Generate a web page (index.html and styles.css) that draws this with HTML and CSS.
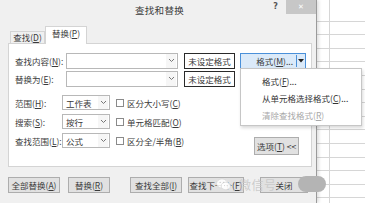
FILE: index.html
```html
<!DOCTYPE html>
<html lang="zh">
<head>
<meta charset="utf-8">
<link rel="stylesheet" href="styles.css">
</head>
<body>
<div class="screen">
  <div class="dialog">
    <div class="titlebar">
      <span class="title">查找和替换</span>
      <span class="help">?</span>
      <span class="close">✕</span>
    </div>
    <div class="tabs">
      <div class="tab">查找(<u>D</u>)</div>
      <div class="tab active">替换(<u>P</u>)</div>
    </div>
    <div class="panel">
      <div class="row find">
        <span class="lbl">查找内容(<u>N</u>):</span>
        <div class="combo wide"><span class="val"></span><span class="arr"><svg width="7" height="5" viewBox="0 0 7 5"><path d="M1 1l2.5 2.5L6 1" fill="none" stroke="#777" stroke-width="1"/></svg></span></div>
        <div class="fmtbox">未设定格式</div>
        <div class="split"><span class="st">格式(<u>M</u>)...</span><span class="sd"><svg width="6" height="4" viewBox="0 0 6 4"><path d="M0 0h6L3 3.5z" fill="#222"/></svg></span></div>
      </div>
      <div class="row repl">
        <span class="lbl">替换为(<u>E</u>):</span>
        <div class="combo wide"><span class="val"></span><span class="arr"><svg width="7" height="5" viewBox="0 0 7 5"><path d="M1 1l2.5 2.5L6 1" fill="none" stroke="#777" stroke-width="1"/></svg></span></div>
        <div class="fmtbox">未设定格式</div>
      </div>
      <div class="lower">
        <div class="optcol">
          <div class="orow">
            <span class="olbl">范围(<u>H</u>):</span>
            <div class="combo small"><span class="val">工作表</span><span class="arr"><svg width="7" height="5" viewBox="0 0 7 5"><path d="M1 1l2.5 2.5L6 1" fill="none" stroke="#777" stroke-width="1"/></svg></span></div>
            <span class="chk"></span><span class="clbl">区分大小写(<u>C</u>)</span>
          </div>
          <div class="orow">
            <span class="olbl">搜索(<u>S</u>):</span>
            <div class="combo small"><span class="val">按行</span><span class="arr"><svg width="7" height="5" viewBox="0 0 7 5"><path d="M1 1l2.5 2.5L6 1" fill="none" stroke="#777" stroke-width="1"/></svg></span></div>
            <span class="chk"></span><span class="clbl">单元格匹配(<u>O</u>)</span>
          </div>
          <div class="orow">
            <span class="olbl">查找范围(<u>L</u>):</span>
            <div class="combo small"><span class="val">公式</span><span class="arr"><svg width="7" height="5" viewBox="0 0 7 5"><path d="M1 1l2.5 2.5L6 1" fill="none" stroke="#777" stroke-width="1"/></svg></span></div>
            <span class="chk"></span><span class="clbl">区分全/半角(<u>B</u>)</span>
          </div>
        </div>
        <div class="btn optbtn">选项(<u>T</u>) &lt;&lt;</div>
      </div>
    </div>
    <div class="buttons">
      <div class="btn b1">全部替换(<u>A</u>)</div>
      <div class="btn b2">替换(<u>R</u>)</div>
      <div class="btn b3">查找全部(<u>I</u>)</div>
      <div class="btn b4">查找下一个(<u>F</u>)</div>
      <div class="btn b5">关闭</div>
    </div>
  </div>
  <div class="sheet"></div>

  <div class="menu">
    <div class="mi">格式(<u>F</u>)...</div>
    <div class="mi">从单元格选择格式(<u>C</u>)...</div>
    <div class="mi dis">清除查找格式(<u>R</u>)</div>
  </div>

  <div class="watermark">
    <svg class="wx" width="15" height="13" viewBox="0 0 15 13"><ellipse cx="6" cy="5.5" rx="5.5" ry="4.6" fill="rgba(255,255,255,0.85)" stroke="#d8d8d8" stroke-width="0.8"/><ellipse cx="9.8" cy="8" rx="4.6" ry="3.8" fill="rgba(255,255,255,0.9)" stroke="#d8d8d8" stroke-width="0.8"/><circle cx="4.2" cy="4.4" r="0.7" fill="#ccc"/><circle cx="7.6" cy="4.4" r="0.7" fill="#ccc"/><circle cx="8.6" cy="7.6" r="0.55" fill="#ccc"/><circle cx="11.2" cy="7.6" r="0.55" fill="#ccc"/></svg>
    <span class="wtext">微信号:</span>
    <span class="blob"></span>
  </div>
</div>
</body>
</html>
```

FILE: styles.css
```css
* { box-sizing: border-box; }
html, body { margin: 0; padding: 0; }
body {
  width: 365px;
  height: 203px;
  overflow: hidden;
  font-family: "Noto Sans CJK SC", "Noto Sans", sans-serif;
  font-size: 9px;
  color: #3a3a3a;
  background: #fff;
}
u { text-decoration: underline; text-underline-offset: 1px; }

.screen {
  position: relative;
  display: flex;
  width: 365px;
  height: 203px;
}

.dialog {
  width: 317px;
  height: 203px;
  background: #f0f0f0;
  border-right: 1px solid #9a9a9a;
  box-shadow: 2px 0 3px rgba(0,0,0,0.12);
  display: flex;
  flex-direction: column;
  flex: none;
  position: relative;
  z-index: 1;
}

.titlebar {
  height: 22px;
  display: flex;
  align-items: flex-start;
  position: relative;
}
.title {
  position: absolute;
  left: 135px;
  top: 3px;
  font-size: 9.5px;
  color: #3a3a3a;
  letter-spacing: 0.3px;
}
.help {
  margin-left: auto;
  margin-top: 2px;
  margin-right: 8px;
  font-family: "DejaVu Sans", sans-serif;
  font-weight: bold;
  font-size: 8px;
  color: #555;
}
.close {
  width: 30px;
  height: 14px;
  background: #c7c7c7;
  color: #fff;
  font-family: "DejaVu Sans", sans-serif;
  font-size: 7px;
  display: flex;
  align-items: center;
  justify-content: center;
}

.tabs {
  height: 21px;
  display: flex;
  align-items: flex-end;
  padding-left: 10px;
}
.tab {
  height: 12px;
  width: 35px;
  border: 1px solid #d4d4d4;
  border-bottom: none;
  background: #f0f0f0;
  font-size: 8.5px;
  line-height: 11px;
  white-space: nowrap;
  display: flex;
  justify-content: center;
}
.tab.active {
  height: 18px;
  width: 42px;
  background: #fff;
  margin-bottom: -1px;
  position: relative;
  z-index: 2;
  line-height: 13px;
}

.panel {
  margin-left: 8px;
  width: 304px;
  height: 124px;
  border: 1px solid #d4d4d4;
  background: #fff;
  padding: 8px 0 0 6px;
  position: relative;
}

.row {
  display: flex;
  align-items: center;
  height: 17px;
}
.row.repl { margin-top: 1px; }
.lbl {
  width: 51px;
  font-size: 8.5px;
  white-space: nowrap;
}
.combo {
  height: 16px;
  border: 1px solid #b8b8b8;
  background: #fff;
  display: flex;
  align-items: center;
}
.combo.wide { width: 112px; }
.combo .val { flex: 1; padding-left: 3px; font-size: 8.5px; }
.combo .arr {
  width: 10px;
  height: 100%;
  display: flex;
  align-items: center;
  justify-content: center;
  background: #f6f6f6;
  margin-right: 1px;
}
.fmtbox {
  margin-left: 6px;
  width: 51px;
  height: 16px;
  border: 1px solid #2a2a2a;
  background: #fff;
  font-size: 8.5px;
  display: flex;
  align-items: center;
  justify-content: center;
}
.split {
  margin-left: 5px;
  width: 66px;
  height: 16px;
  border: 1px solid #4a90d9;
  background: #dbeaf9;
  display: flex;
  align-items: center;
}
.split .st { flex: 1; text-align: right; padding-right: 3px; font-size: 8.5px; }
.split .sd {
  width: 9px;
  height: 12px;
  border-left: 1px solid #4a90d9;
  display: flex;
  align-items: center;
  justify-content: center;
}

.lower {
  display: flex;
  margin-top: 8px;
}
.optcol {
  display: flex;
  flex-direction: column;
  gap: 4px;
}
.orow {
  display: flex;
  align-items: center;
  height: 15px;
}
.olbl {
  width: 47px;
  font-size: 8.5px;
  white-space: nowrap;
}
.combo.small { width: 48px; height: 15px; }
.chk {
  width: 8px;
  height: 8px;
  border: 1px solid #8a8a8a;
  background: #fff;
  margin-left: 6px;
  margin-right: 3px;
}
.clbl { font-size: 8.5px; white-space: nowrap; }

.btn {
  height: 16px;
  border: 1px solid #adadad;
  background: #e1e1e1;
  font-size: 8.5px;
  display: flex;
  align-items: center;
  justify-content: center;
  white-space: nowrap;
}
.optbtn {
  width: 45px;
  height: 18px;
  margin-left: 70px;
  margin-top: 42px;
}

.buttons {
  display: flex;
  margin-top: 10px;
  padding-left: 8px;
}
.b1 { width: 52px; }
.b2 { width: 42px; margin-left: 8px; }
.b3 { width: 52px; margin-left: 20px; }
.b4 { width: 56px; margin-left: 6px; }
.b5 { width: 48px; margin-left: 16px; }

.sheet {
  flex: 1;
  background-color: #fff;
  background-image:
    linear-gradient(to right, transparent 12px, #d6d6d6 12px, #d6d6d6 13px, transparent 13px),
    repeating-linear-gradient(to bottom, transparent 0, transparent 12.6px, #d6d6d6 12.6px, #d6d6d6 13.6px);
  background-position: 0 0, 0 8px;
}

.menu {
  position: absolute;
  left: 240px;
  top: 68px;
  width: 122px;
  height: 58px;
  background: #fff;
  border: 1px solid #c6c6c6;
  box-shadow: 1px 2px 3px rgba(0,0,0,0.15);
  z-index: 5;
  padding-top: 5px;
}
.mi {
  height: 17px;
  padding-left: 21px;
  font-size: 8.5px;
  line-height: 15px;
  color: #333;
}
.mi.dis { color: #a8a8a8; }

.watermark {
  position: absolute;
  left: 216px;
  top: 175px;
  height: 18px;
  display: flex;
  align-items: center;
  z-index: 6;
}
.wx { margin-right: 8px; }
.wtext {
  font-size: 12px;
  color: rgba(200,200,200,0.9);
  letter-spacing: 0.5px;
}
.blob {
  position: absolute;
  left: 82px;
  top: 1px;
  width: 28px;
  height: 16px;
  border-radius: 8px;
  background: #b4b4b4;
}
```
